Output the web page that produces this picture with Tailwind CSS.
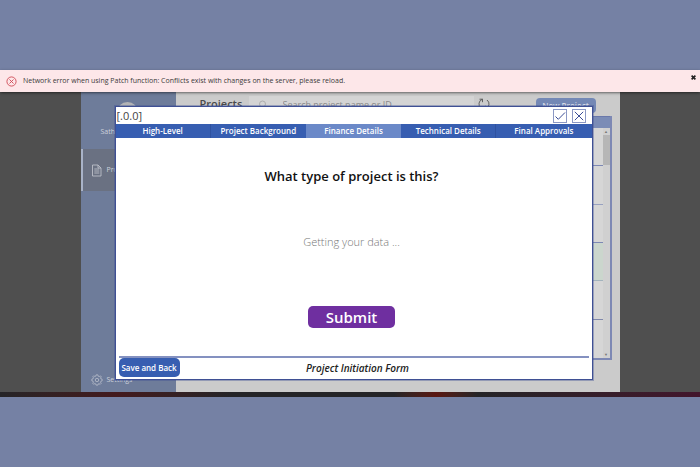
<!DOCTYPE html>
<html lang="en">
  <head>
    <meta charset="utf-8" />
    <title>Project Initiation Form</title>
    <meta name="viewport" content="width=device-width, initial-scale=1" />
    <script src="https://cdn.jsdelivr.net/npm/@tailwindcss/browser@4"></script>
  </head>
  <body class="flex min-h-screen flex-col justify-center bg-[#7581a4] font-['Open_Sans',sans-serif]">
    <!-- Error banner -->
    <div role="alert" class="relative z-10 flex h-[22px] items-center bg-[#fde7e9] pr-1 pl-1.5 text-[#3b3a39] shadow-sm shadow-black/40">
      <svg class="size-[11px] shrink-0" viewBox="0 0 12 12" fill="none" stroke="#cf4a55">
        <circle cx="6" cy="6" r="5" />
        <path d="M3.8 3.8l4.4 4.4M8.2 3.8l-4.4 4.4" />
      </svg>
      <p class="ml-1.5 grow text-[7px]">Network error when using Patch function: Conflicts exist with changes on the server, please reload.</p>
      <button type="button" aria-label="Dismiss" class="mb-2 flex size-[6px] items-center justify-center">
        <svg class="size-[5px]" viewBox="0 0 6 6" stroke="#222" stroke-width="2">
          <path d="M.7.7l4.6 4.6M5.3.7L.7 5.3" />
        </svg>
      </button>
    </div>

    <div class="flex h-[300px] justify-center bg-[#4f4f4f]">
      <div class="relative flex w-[77%] overflow-hidden bg-[#cbcbcb]">
        <!-- Sidebar -->
        <aside class="flex w-[95px] shrink-0 flex-col bg-[#6e7c9a] text-[7px] text-[#cdd1da]">
          <div class="flex h-[57px] flex-col items-start pt-2.5">
            <span class="ml-9 size-[21px] rounded-full bg-[#b3b4b6]"></span>
            <span class="ml-5 pt-1">Sathish</span>
          </div>
          <a href="#" class="flex h-[42px] items-center gap-1 border-l-2 border-[#a9b3c8] bg-[#6a7182] pl-2">
            <svg class="h-[13px] w-[12px]" viewBox="0 0 12 13" fill="none" stroke="#bcc0c8" stroke-width=".9">
              <path d="M1.5 1h5.5l3 3v8H1.5zM7 1v3h3M3.3 5h5M3.3 7h5M3.3 9h5" />
            </svg>
            Projects
          </a>
          <a href="#" class="mt-auto mb-1.5 flex items-center gap-1 pl-2.5">
            <svg class="size-[12px]" viewBox="0 0 14 14" fill="none" stroke="#b4bac8">
              <path d="M6 1h2l.4 1.6 1.2.5L11 2.2 12 3.3l-.9 1.3.5 1.1L13 6v2l-1.4.4-.5 1.2.8 1.3-1.2 1.2-1.3-.9-1.1.5L8 13H6l-.4-1.4-1.2-.5-1.3.9L2 10.8l.9-1.3-.5-1.1L1 8V6l1.4-.4.5-1.2-.8-1.2 1.1-1.1 1.3.9 1.1-.5z" />
              <circle cx="7" cy="7" r="2" />
            </svg>
            Settings
          </a>
        </aside>

        <!-- Project list -->
        <main class="flex min-w-0 grow flex-col pt-1 pr-2 pl-6">
          <div class="flex h-[20px] items-start">
            <h1 class="w-[49px] text-[11px] leading-4 font-semibold text-[#4a4a4a]">Projects</h1>
            <label class="flex h-[17px] grow items-center bg-[#d4d4d4] pl-2">
              <svg class="mr-4 size-[10px] shrink-0" viewBox="0 0 10 10" fill="none" stroke="#adadad">
                <circle cx="5.5" cy="4" r="3" />
                <path d="M3.3 6.2L.8 9" />
              </svg>
              <input type="text" aria-label="Search projects" placeholder="Search project name or ID" class="w-full text-[9px] placeholder-[#8a8a8a]" />
            </label>
            <button type="button" aria-label="Refresh" class="mt-0.5 ml-1">
              <svg class="size-[12px]" viewBox="0 0 12 12" fill="none" stroke="#555" stroke-width=".9">
                <path d="M4.5 1.2A5 5 0 0 0 3 10M1.5 1.2h3v3M7.5 10.8A5 5 0 0 0 9 2M10.5 10.8h-3v-3" />
              </svg>
            </button>
            <button type="button" class="mt-0.5 mr-4 ml-[46px] h-[15px] w-[60px] shrink-0 rounded bg-[#7488b5] text-[8px] leading-4 font-semibold text-[#d5dae6]">New Project</button>
          </div>
          <div class="flex h-[244px] flex-col border-r-2 border-b-2 border-[#7d88b4] bg-[#d6d6d6]">
            <div class="h-[12px] shrink-0 border-t border-[#6a78aa] bg-[#7b8cb6]"></div>
            <div class="flex grow">
              <div class="grid grow grid-rows-6">
                <div class="border-b border-[#7d88b4]"></div>
                <div class="border-b border-[#98a1c0]"></div>
                <div class="border-b border-[#7d88b4]"></div>
                <div class="border-b border-[#a3b3bd] bg-[#cbd6cd]"></div>
                <div class="border-b border-[#8088ab]"></div>
                <div></div>
              </div>
              <div class="flex w-[7px] flex-col items-center bg-[#d0d0d0] text-[4px] leading-[7px] text-[#777]">
                <span>▲</span>
                <span class="h-[30px] w-full bg-[#b6b6b6]"></span>
                <span class="mt-auto">▼</span>
              </div>
            </div>
          </div>
        </main>

        <!-- Form dialog -->
        <form class="absolute top-[14px] right-[27px] bottom-[12px] left-[34px] flex flex-col border border-[#3f5094] bg-white ring-1 ring-[#3f5094]/40">
          <header class="flex h-[17px] shrink-0 items-center gap-[5px] pr-1.5 pl-px">
            <span class="grow text-[11px] leading-4 text-[#444]">[.0.0]</span>
            <button type="submit" aria-label="Save" class="size-[14px] border border-[#8b98c4]">
              <svg viewBox="0 0 12 12" fill="none" stroke="#3a4c96">
                <path d="M1.5 6.5l2.8 2.8L11 2.5" />
              </svg>
            </button>
            <button type="button" aria-label="Close" class="size-[14px] border border-[#8b98c4]">
              <svg viewBox="0 0 12 12" fill="none" stroke="#3a4c96">
                <path d="M1.8 1.8l8.4 8.4M10.2 1.8l-8.4 8.4" />
              </svg>
            </button>
          </header>
          <nav class="grid h-[14px] shrink-0 grid-cols-5 bg-[#375eb1] text-[8px] leading-[14px] font-semibold text-white">
            <button type="button" class="border-r border-[#2f52a0]">High-Level</button>
            <button type="button">Project Background</button>
            <button type="button" class="bg-[#6b89c8]">Finance Details</button>
            <button type="button" class="border-r border-[#2f52a0]">Technical Details</button>
            <button type="button">Final Approvals</button>
          </nav>
          <div class="flex grow flex-col items-center pt-7 pr-1">
            <h2 class="text-[13px] leading-5 font-semibold text-[#111]">What type of project is this?</h2>
            <p class="mt-12 text-[11px] leading-4 font-light text-[#777]">Getting your data ...</p>
            <button type="submit" class="mt-auto mb-7 h-[22px] w-[87px] rounded-[5px] bg-[#6f2fa0] text-[15px] leading-[22px] font-semibold text-white">Submit</button>
          </div>
          <footer class="mx-[3px] grid h-[23px] shrink-0 grid-cols-[1fr_auto_1fr] items-center border-t-2 border-[#8491c0] pb-0.5">
            <button type="button" class="h-[19px] w-[61px] rounded-[5px] bg-[#375eb1] text-[8px] leading-4 font-semibold text-white">Save and Back</button>
            <span class="pl-2 text-[10px] leading-4 font-semibold text-[#222] italic">Project Initiation Form</span>
          </footer>
        </form>
      </div>
    </div>
    <div class="flex h-[5px] bg-[#242427]">
      <div class="w-1/3 bg-linear-to-r from-[#252427] via-[#43191d] to-[#242427]"></div>
      <div class="ml-[23%] w-[12%] bg-linear-to-r from-[#242427] via-[#5a1510] to-[#242427]"></div>
      <div class="grow bg-linear-to-r from-[#242427] to-[#42152c]"></div>
    </div>
  </body>
</html>
